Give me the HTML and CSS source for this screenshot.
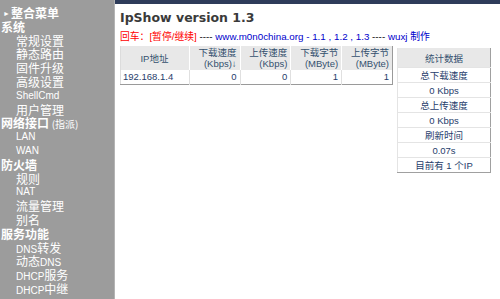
FILE: index.html
```html
<!DOCTYPE html>
<html>
<head>
<meta charset="utf-8">
<link rel="stylesheet" href="styles.css">
</head>
<body>
<div class="page">
  <nav class="side">
    <div class="hd"><span class="tri">&#9658;</span>整合菜单</div>
    <div class="hd">系统</div>
    <div class="it">常规设置</div>
    <div class="it">静态路由</div>
    <div class="it">固件升级</div>
    <div class="it">高级设置</div>
    <div class="it en">ShellCmd</div>
    <div class="it">用户管理</div>
    <div class="hd">网络接口 <span class="sm">(指派)</span></div>
    <div class="it en">LAN</div>
    <div class="it en">WAN</div>
    <div class="hd">防火墙</div>
    <div class="it">规则</div>
    <div class="it en">NAT</div>
    <div class="it">流量管理</div>
    <div class="it">别名</div>
    <div class="hd">服务功能</div>
    <div class="it"><span class="e">DNS</span>转发</div>
    <div class="it">动态<span class="e">DNS</span></div>
    <div class="it"><span class="e">DHCP</span>服务</div>
    <div class="it"><span class="e">DHCP</span>中继</div>
  </nav>
  <main class="main">
    <div class="topbar"></div>
    <div class="content">
      <h1 class="title">IpShow version 1.3</h1>
      <p class="info"><span class="red">回车：[暂停/继续]</span> ---- <span class="blue">www.m0n0china.org - 1.1 , 1.2 , 1.3</span> ---- <span class="blue">wuxj 制作</span></p>
      <div class="tables">
        <table class="ipt">
          <tr class="head">
            <th class="c1">IP地址</th>
            <th>下载速度<br>(Kbps)&#8595;</th>
            <th>上传速度<br>(Kbps)</th>
            <th>下载字节<br>(MByte)</th>
            <th>上传字节<br>(MByte)</th>
          </tr>
          <tr>
            <td class="c1">192.168.1.4</td>
            <td>0</td>
            <td>0</td>
            <td>1</td>
            <td>1</td>
          </tr>
        </table>
        <table class="stat">
          <tr><th>统计数据</th></tr>
          <tr><td>总下载速度</td></tr>
          <tr><td>0 Kbps</td></tr>
          <tr><td>总上传速度</td></tr>
          <tr><td>0 Kbps</td></tr>
          <tr><td>刷新时间</td></tr>
          <tr><td>0.07s</td></tr>
          <tr><td>目前有 1 个IP</td></tr>
        </table>
      </div>
    </div>
  </main>
</div>
</body>
</html>
```
FILE: styles.css
```css
html, body {
  margin: 0;
  padding: 0;
  background: #fff;
}
.page {
  display: flex;
  width: 500px;
  height: 299px;
  overflow: hidden;
}
.side {
  width: 115px;
  flex: none;
  background: #9c9c9c;
  color: #fff;
  font-family: "Noto Sans CJK SC", sans-serif;
  font-size: 12px;
  padding-top: 6px;
  box-sizing: border-box;
  border-right: 1px solid #b4b4b4;
}
.side div {
  height: 13.8px;
  line-height: 13.8px;
  white-space: nowrap;
}
.hd {
  font-weight: bold;
  padding-left: 1px;
}
.tri {
  font-size: 7px;
  display: inline-block;
  width: 10px;
  vertical-align: 2px;
  padding-left: 2px;
  box-sizing: border-box;
}
.it {
  padding-left: 16px;
}
.en, .e {
  font-family: "Liberation Sans", sans-serif;
  font-size: 10px;
}
.sm {
  font-size: 10px;
  font-weight: normal;
}
.main {
  flex: 1;
  display: flex;
  flex-direction: column;
}
.topbar {
  height: 4px;
  background: #2e3c5a;
}
.content {
  padding: 5px 0 0 5px;
  font-family: "Liberation Sans", "Noto Sans CJK SC", sans-serif;
}
.title {
  margin: 0;
  font-family: "DejaVu Sans", sans-serif;
  font-size: 12.5px;
  font-weight: bold;
  color: #3a3a3a;
  line-height: 17px;
}
.info {
  margin: 5px 0 0 0;
  font-size: 9.8px;
  line-height: 12px;
  color: #000;
}
.red { color: #ff0000; }
.blue { color: #0000cc; }
.tables {
  display: flex;
  align-items: flex-start;
  gap: 4px;
  margin-top: 3px;
}
table {
  border-collapse: collapse;
  font-size: 9.5px;
  color: #1f3d6b;
}
.ipt {
  width: 273px;
  border-right: 1px solid #9a9a9a;
  border-bottom: 1px solid #9a9a9a;
  border-left: 1px solid #dcdcdc;
}
.ipt th {
  background: #e8e8e8;
  font-weight: normal;
  text-align: right;
  padding: 1px 3px 1px 2px;
  line-height: 11px;
  height: 23px;
  width: 51px;
  border-left: 1px solid #fff;
  box-sizing: border-box;
  color: #34506e;
}
.ipt th.c1 {
  text-align: center;
  width: 69px;
  border-left: none;
}
.ipt td {
  text-align: right;
  padding: 0 3px;
  height: 14px;
  line-height: 13px;
  border-left: 1px solid #e0e0e0;
  box-sizing: border-box;
}
.ipt td.c1 {
  text-align: left;
  border-left: none;
  padding-left: 2px;
}
.stat {
  width: 94px;
  margin-top: 2px;
  border-right: 1px solid #a0a0a0;
  border-bottom: 1px solid #a0a0a0;
  border-left: 1px solid #e4e4e4;
}
.stat th {
  background: #e8e8e8;
  font-weight: normal;
  height: 19px;
  padding: 0;
  color: #34506e;
}
.stat td {
  text-align: center;
  height: 15px;
  padding: 0;
  border-top: 1px solid #e4e4e4;
  box-sizing: border-box;
}
```
